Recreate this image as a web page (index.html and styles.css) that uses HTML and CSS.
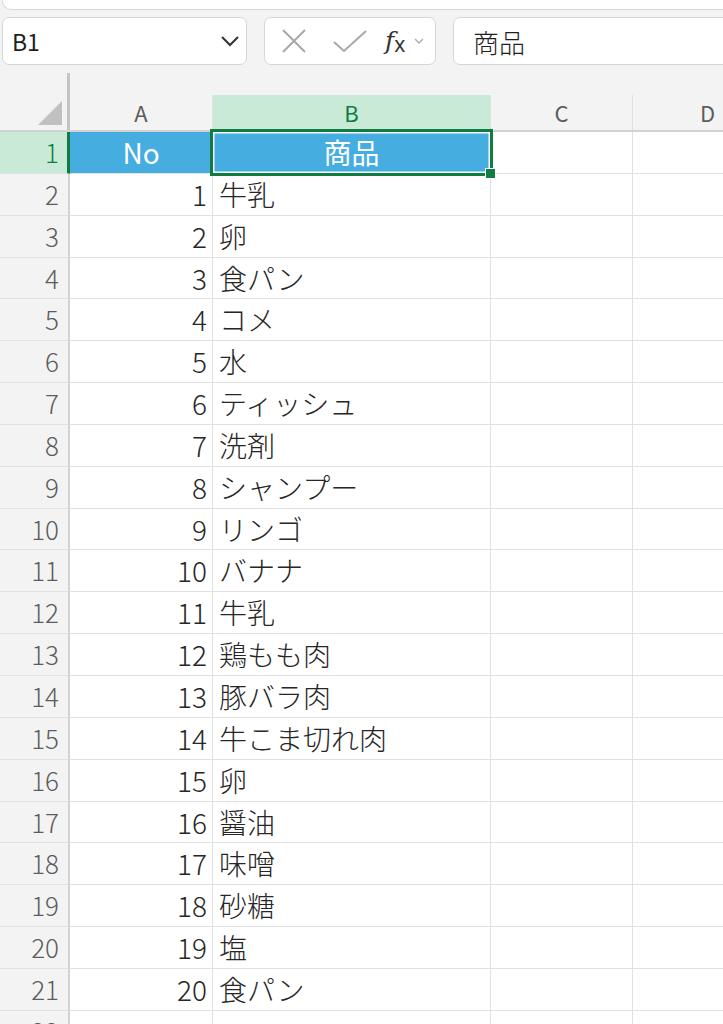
FILE: index.html
```html
<!DOCTYPE html>
<html>
<head>
    <meta name="viewport" content="width=device-width, initial-scale=1.0">
    <link rel="stylesheet" href="styles.css">
</head>

<body>
    <div class="ribbon-edge"></div>

    <div class="formula-bar">
        <div class="name-box">
            <span>B1</span>
            <svg class="chevron" width="20" height="12" viewBox="0 0 20 12"><path d="M2 2 L10 10 L18 2" fill="none" stroke="#333" stroke-width="2"/></svg>
        </div>
        <div class="fx-buttons">
            <svg width="24" height="24" viewBox="0 0 24 24"><path d="M1 1 L23 23 M23 1 L1 23" stroke="#a8a8a8" stroke-width="2" fill="none"/></svg>
            <svg width="34" height="24" viewBox="0 0 34 24"><path d="M1 13 L11 22 L33 2" stroke="#a8a8a8" stroke-width="2" fill="none"/></svg>
            <span class="fx"><i>f</i><sub>x</sub></span>
            <svg class="mini-chevron" width="10" height="7" viewBox="0 0 10 7"><path d="M1 1 L5 5 L9 1" fill="none" stroke="#b0b0b0" stroke-width="1.5"/></svg>
        </div>
        <div class="formula-input">商品</div>
    </div>

    <div class="sheet">
        <div class="col-heads">
            <div class="corner"><span class="tri"></span></div>
            <div class="col-head">A</div>
            <div class="col-head active">B</div>
            <div class="col-head">C</div>
            <div class="col-head">D</div>
        </div>

        <div class="row">
            <div class="row-head active">1</div>
            <div class="cell num title">No</div>
            <div class="cell title selected">商品</div>
            <div class="cell"></div>
            <div class="cell"></div>
        </div>
        <div class="row"><div class="row-head">2</div><div class="cell num">1</div><div class="cell">牛乳</div><div class="cell"></div><div class="cell"></div></div>
        <div class="row"><div class="row-head">3</div><div class="cell num">2</div><div class="cell">卵</div><div class="cell"></div><div class="cell"></div></div>
        <div class="row"><div class="row-head">4</div><div class="cell num">3</div><div class="cell">食パン</div><div class="cell"></div><div class="cell"></div></div>
        <div class="row"><div class="row-head">5</div><div class="cell num">4</div><div class="cell">コメ</div><div class="cell"></div><div class="cell"></div></div>
        <div class="row"><div class="row-head">6</div><div class="cell num">5</div><div class="cell">水</div><div class="cell"></div><div class="cell"></div></div>
        <div class="row"><div class="row-head">7</div><div class="cell num">6</div><div class="cell">ティッシュ</div><div class="cell"></div><div class="cell"></div></div>
        <div class="row"><div class="row-head">8</div><div class="cell num">7</div><div class="cell">洗剤</div><div class="cell"></div><div class="cell"></div></div>
        <div class="row"><div class="row-head">9</div><div class="cell num">8</div><div class="cell">シャンプー</div><div class="cell"></div><div class="cell"></div></div>
        <div class="row"><div class="row-head">10</div><div class="cell num">9</div><div class="cell">リンゴ</div><div class="cell"></div><div class="cell"></div></div>
        <div class="row"><div class="row-head">11</div><div class="cell num">10</div><div class="cell">バナナ</div><div class="cell"></div><div class="cell"></div></div>
        <div class="row"><div class="row-head">12</div><div class="cell num">11</div><div class="cell">牛乳</div><div class="cell"></div><div class="cell"></div></div>
        <div class="row"><div class="row-head">13</div><div class="cell num">12</div><div class="cell">鶏もも肉</div><div class="cell"></div><div class="cell"></div></div>
        <div class="row"><div class="row-head">14</div><div class="cell num">13</div><div class="cell">豚バラ肉</div><div class="cell"></div><div class="cell"></div></div>
        <div class="row"><div class="row-head">15</div><div class="cell num">14</div><div class="cell">牛こま切れ肉</div><div class="cell"></div><div class="cell"></div></div>
        <div class="row"><div class="row-head">16</div><div class="cell num">15</div><div class="cell">卵</div><div class="cell"></div><div class="cell"></div></div>
        <div class="row"><div class="row-head">17</div><div class="cell num">16</div><div class="cell">醤油</div><div class="cell"></div><div class="cell"></div></div>
        <div class="row"><div class="row-head">18</div><div class="cell num">17</div><div class="cell">味噌</div><div class="cell"></div><div class="cell"></div></div>
        <div class="row"><div class="row-head">19</div><div class="cell num">18</div><div class="cell">砂糖</div><div class="cell"></div><div class="cell"></div></div>
        <div class="row"><div class="row-head">20</div><div class="cell num">19</div><div class="cell">塩</div><div class="cell"></div><div class="cell"></div></div>
        <div class="row"><div class="row-head">21</div><div class="cell num">20</div><div class="cell">食パン</div><div class="cell"></div><div class="cell"></div></div>
        <div class="row"><div class="row-head">22</div><div class="cell num"></div><div class="cell"></div><div class="cell"></div><div class="cell"></div></div>
    </div>
</body>
</html>
```

FILE: styles.css
```css
* {
    margin: 0;
    padding: 0;
    box-sizing: border-box;
}

:root {
    --bg: #f3f3f3;
    --grid-line: #e1e1e1;
    --head-line: #d2d2d2;
    --excel-green: #107c41;
    --head-active: #caead8;
    --cell-blue: #45ade0;
    --text: #262626;
    --text-head: #5c5c5c;
}

body {
    background: var(--bg);
    font-family: "Noto Sans CJK JP", "Noto Sans", sans-serif;
    color: var(--text);
    overflow: hidden;
}

.ribbon-edge {
    height: 10px;
    margin-left: 2px;
    background: #fff;
    border: 1px solid #d8d8d8;
    border-top: none;
    border-right: none;
    border-radius: 0 0 0 9px;
}

/* formula bar */
.formula-bar {
    display: flex;
    gap: 17px;
    padding: 7px 0 0 2px;
    height: 63px;
}

.name-box,
.fx-buttons,
.formula-input {
    height: 48px;
    background: #fff;
    border: 1.5px solid #d6d6d6;
    border-radius: 7px;
    display: flex;
    align-items: center;
}

.name-box {
    width: 245px;
    padding: 0 6px 0 9px;
    justify-content: space-between;
    font-size: 23px;
    color: #1f1f1f;
}

.fx-buttons {
    width: 172px;
    padding: 0 0 0 17px;
}

.fx-buttons svg:nth-child(2) {
    margin-left: 27px;
}

.fx {
    margin-left: 18px;
    font-family: "DejaVu Serif", serif;
    font-size: 25px;
    color: #333;
    line-height: 1;
}

.fx sub {
    font-family: "Noto Sans", sans-serif;
    font-style: normal;
    font-size: 21px;
    vertical-align: -3px;
}

.mini-chevron {
    margin-left: 9px;
}

.formula-input {
    flex: 1;
    margin-right: -20px;
    padding-left: 19px;
    font-size: 26px;
    font-weight: 300;
    color: #1f1f1f;
}

/* sheet */
.sheet {
    display: flex;
    flex-direction: column;
}

.col-heads,
.row {
    display: grid;
    grid-template-columns: 70px 143px 278px 142px 150px;
}

.col-heads {
    height: 59px;
    border-bottom: 2px solid var(--head-line);
}

.corner {
    border-right: 3px solid #c4c4c4;
    display: flex;
    align-items: flex-end;
    justify-content: flex-end;
    padding: 0 5px 5px 0;
}

.tri {
    width: 24px;
    height: 24px;
    background: #c0c0c0;
    clip-path: polygon(100% 0, 100% 100%, 0 100%);
}

.col-head {
    align-self: end;
    height: 35px;
    border-right: 1px solid var(--grid-line);
    text-align: center;
    font-size: 22px;
    line-height: 35px;
    color: var(--text-head);
}

.col-head.active {
    background: var(--head-active);
    color: var(--excel-green);
    border-right-color: var(--head-active);
}

.row {
    height: 41.85px;
}

.row-head {
    background: var(--bg);
    border-right: 2px solid var(--head-line);
    border-bottom: 1px solid var(--grid-line);
    text-align: right;
    padding-right: 9px;
    font-size: 26px;
    font-weight: 300;
    line-height: 40px;
    color: var(--text-head);
}

.row-head.active {
    background: var(--head-active);
    color: var(--excel-green);
    border-right: 3px solid var(--excel-green);
    padding-right: 8px;
}

.cell {
    background: #fff;
    border-right: 1px solid var(--grid-line);
    border-bottom: 1px solid var(--grid-line);
    padding: 0 6px;
    font-size: 28px;
    font-weight: 300;
    line-height: 40px;
    white-space: nowrap;
}

.cell.num {
    text-align: right;
    padding-right: 5px;
}

.cell.title {
    background: var(--cell-blue);
    color: #fff;
    font-weight: 400;
    text-align: center;
    padding: 0;
}

.cell.selected {
    position: relative;
}

.cell.selected::before {
    content: "";
    position: absolute;
    top: -3px;
    left: -3px;
    right: -3px;
    bottom: -3px;
    border: 3px solid var(--excel-green);
    box-shadow: inset 0 0 0 1.5px #fff;
}

.cell.selected::after {
    content: "";
    position: absolute;
    right: -6px;
    bottom: -6px;
    width: 9px;
    height: 9px;
    background: var(--excel-green);
    border: 1px solid #fff;
}
```
